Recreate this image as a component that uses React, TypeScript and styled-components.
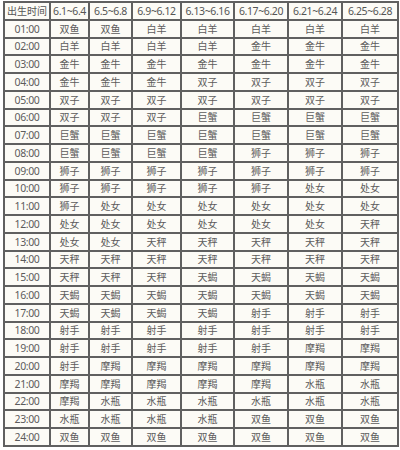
import React from "react";
import styled, { createGlobalStyle } from "styled-components";

const GlobalStyle = createGlobalStyle`
  html, body {
    margin: 0;
    padding: 0;
    background: #ffffff;
  }
`;

const headers = ["出生时间", "6.1~6.4", "6.5~6.8", "6.9~6.12", "6.13~6.16", "6.17~6.20", "6.21~6.24", "6.25~6.28"];

const colWidths = [46, 39, 43, 49, 53, 54, 54, 56];

// each row: hour followed by the sign for each date range
const rows: string[][] = [
  ["01:00", "双鱼", "双鱼", "白羊", "白羊", "白羊", "白羊", "白羊"],
  ["02:00", "白羊", "白羊", "白羊", "白羊", "金牛", "金牛", "金牛"],
  ["03:00", "金牛", "金牛", "金牛", "金牛", "金牛", "金牛", "金牛"],
  ["04:00", "金牛", "金牛", "金牛", "双子", "双子", "双子", "双子"],
  ["05:00", "双子", "双子", "双子", "双子", "双子", "双子", "双子"],
  ["06:00", "双子", "双子", "双子", "巨蟹", "巨蟹", "巨蟹", "巨蟹"],
  ["07:00", "巨蟹", "巨蟹", "巨蟹", "巨蟹", "巨蟹", "巨蟹", "巨蟹"],
  ["08:00", "巨蟹", "巨蟹", "巨蟹", "巨蟹", "狮子", "狮子", "狮子"],
  ["09:00", "狮子", "狮子", "狮子", "狮子", "狮子", "狮子", "狮子"],
  ["10:00", "狮子", "狮子", "狮子", "狮子", "狮子", "处女", "处女"],
  ["11:00", "狮子", "处女", "处女", "处女", "处女", "处女", "处女"],
  ["12:00", "处女", "处女", "处女", "处女", "处女", "处女", "天秤"],
  ["13:00", "处女", "处女", "天秤", "天秤", "天秤", "天秤", "天秤"],
  ["14:00", "天秤", "天秤", "天秤", "天秤", "天秤", "天秤", "天秤"],
  ["15:00", "天秤", "天秤", "天秤", "天蝎", "天蝎", "天蝎", "天蝎"],
  ["16:00", "天蝎", "天蝎", "天蝎", "天蝎", "天蝎", "天蝎", "天蝎"],
  ["17:00", "天蝎", "天蝎", "天蝎", "天蝎", "射手", "射手", "射手"],
  ["18:00", "射手", "射手", "射手", "射手", "射手", "射手", "射手"],
  ["19:00", "射手", "射手", "射手", "射手", "射手", "摩羯", "摩羯"],
  ["20:00", "射手", "摩羯", "摩羯", "摩羯", "摩羯", "摩羯", "摩羯"],
  ["21:00", "摩羯", "摩羯", "摩羯", "摩羯", "摩羯", "水瓶", "水瓶"],
  ["22:00", "摩羯", "水瓶", "水瓶", "水瓶", "水瓶", "水瓶", "水瓶"],
  ["23:00", "水瓶", "水瓶", "水瓶", "水瓶", "双鱼", "双鱼", "双鱼"],
  ["24:00", "双鱼", "双鱼", "双鱼", "双鱼", "双鱼", "双鱼", "双鱼"],
];

const Page = styled.div`
  padding: 1px 3px 0 3px;
`;

const Table = styled.table`
  border-collapse: collapse;
  table-layout: fixed;
  width: 394px;
  height: 446px;
  background: #fcfbf6;
  font-family: "Liberation Sans", "Noto Sans CJK SC", sans-serif;
  color: #5c5c5c;
`;

const Cell = styled.td<{ $cjk?: boolean }>`
  border: 2px solid #606060;
  padding: 0;
  text-align: center;
  line-height: 14px;
  white-space: nowrap;
  overflow: hidden;
  font-family: ${(p) => (p.$cjk ? '"Noto Sans CJK SC", sans-serif' : '"Noto Sans", "Liberation Sans", sans-serif')};
  font-size: ${(p) => (p.$cjk ? "10px" : "10.5px")};
  letter-spacing: ${(p) => (p.$cjk ? "0" : "-0.4px")};
`;

const HeadCell = styled(Cell)`
  color: #555555;
`;

const isCjk = (s: string) => /[\u4e00-\u9fff]/.test(s);

export default function App() {
  return (
    <Page>
      <GlobalStyle />
      <Table>
        <colgroup>
          {colWidths.map((w, i) => (
            <col key={i} style={{ width: w }} />
          ))}
        </colgroup>
        <tbody>
          <tr>
            {headers.map((h) => (
              <HeadCell key={h} $cjk={isCjk(h)}>
                {h}
              </HeadCell>
            ))}
          </tr>
          {rows.map((r) => (
            <tr key={r[0]}>
              {r.map((c, i) => (
                <Cell key={i} $cjk={isCjk(c)}>
                  {c}
                </Cell>
              ))}
            </tr>
          ))}
        </tbody>
      </Table>
    </Page>
  );
}
